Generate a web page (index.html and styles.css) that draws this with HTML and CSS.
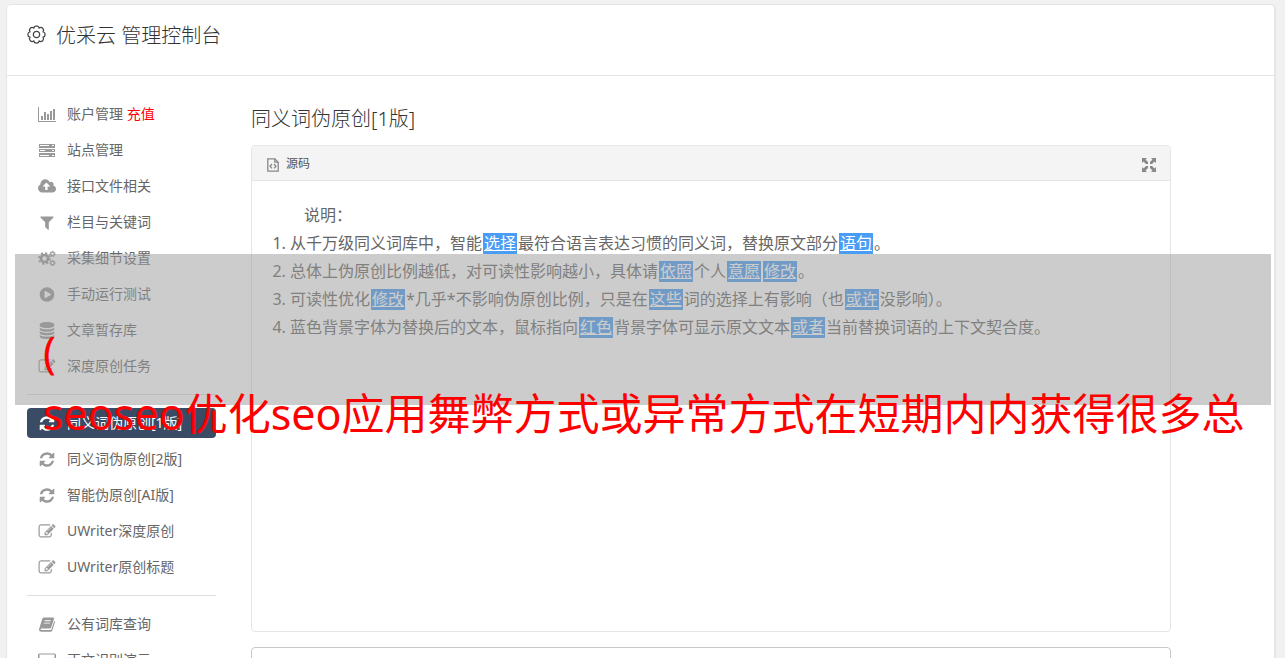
FILE: index.html
```
<!DOCTYPE html>
<html lang="zh-CN">
<head>
    <meta charset="UTF-8">
    <meta name="viewport" content="width=device-width, initial-scale=1.0">
    <title>优采云 管理控制台</title>
    <link rel="stylesheet" href="styles.css">
</head>
<body>
    <!-- shared icons -->
    <svg class="sprite" aria-hidden="true">
        <symbol id="i-edit" viewBox="0 0 1792 1792"><path d="M888 1184l116-116-152-152-116 116v56h96v96h56zm440-720q-16-16-33 1l-350 350q-17 17-1 33t33-1l350-350q17-17 1-33zm80 594v190q0 119-84.500 203.500t-203.500 84.500h-832q-119 0-203.500-84.500t-84.500-203.500v-832q0-119 84.500-203.500t203.500-84.500h832q63 0 117 25 15 7 18 23 3 17-9 29l-49 49q-14 14-32 8-23-6-45-6h-832q-66 0-113 47t-47 113v832q0 66 47 113t113 47h832q66 0 113-47t47-113v-126q0-13 9-22l64-64q15-15 35-7t20 29zm-96-738l288 288-672 672h-288v-288zm444 132l-92 92-288-288 92-92q28-28 68-28t68 28l152 152q28 28 28 68t-28 68z"/></symbol>
        <symbol id="i-refresh" viewBox="0 0 1792 1792"><path d="M1639 1056q0 5-1 7-64 268-268 434.500t-478 166.500q-146 0-282.500-55t-243.500-157l-129 129q-19 19-45 19t-45-19-19-45v-448q0-26 19-45t45-19h448q26 0 45 19t19 45-19 45l-137 137q71 66 161 102t187 36q134 0 250-65t186-179q11-17 53-117 8-23 30-23h192q13 0 22.500 9.500t9.500 22.500zm25-800v448q0 26-19 45t-45 19h-448q-26 0-45-19t-19-45 19-45l138-138q-148-137-349-137-134 0-250 65t-186 179q-11 17-53 117-8 23-30 23h-199q-13 0-22.500-9.500t-9.500-22.500v-7q65-268 270-434.500t480-166.500q146 0 284 55.500t245 156.500l130-129q19-19 45-19t45 19 19 45z"/></symbol>
    </svg>

    <div class="page">
        <header class="page-header">
            <svg class="gear" viewBox="-9 -9 18 18" aria-hidden="true">
                <path d="M6.200-2.600A2.700 2.700 0 0 1 6.200 2.600A2.600 2.600 0 0 1 2.600 6.200A2.700 2.700 0 0 1-2.600 6.200A2.600 2.600 0 0 1-6.200 2.600A2.700 2.700 0 0 1-6.200-2.600A2.600 2.600 0 0 1-2.600-6.200A2.700 2.700 0 0 1 2.600-6.200A2.600 2.600 0 0 1 6.200-2.600Z"/>
                <circle r="3"/>
            </svg>
            <h1>优采云 管理控制台</h1>
        </header>

        <div class="page-body">
            <nav class="menu">
                <a href="#"><svg class="crisp" viewBox="0 0 18 17"><path d="M0 1h1v14h17v1H0zM3 10h2v4H3zM6 6h2v8H6zM9 8h2v6H9zM12 5h2v9h-2zM15 3h2v11h-2z"/></svg><span>账户管理 <em>充值</em></span></a>
                <a href="#"><svg class="crisp" viewBox="0 0 18 17"><path fill-rule="evenodd" d="M1 2h16v4H1zM1 7h16v3H1zM1 11h16v4H1zM2 3v1h9V3zM14 3v1h2V3zM2 8v1h5V8zM14 8v1h2V8zM2 13v1h9v-1zM14 13v1h2v-1z"/></svg>站点管理</a>
                <a href="#"><svg viewBox="0 0 1920 1792"><path d="M1280 864q0-14-9-23l-352-352q-9-9-23-9t-23 9l-351 351q-10 12-10 24 0 14 9 23t23 9h224v352q0 13 9.500 22.500t22.500 9.500h192q13 0 22.500-9.500t9.500-22.500v-352h224q13 0 22.500-9.500t9.500-22.500zm640 288q0 159-112.500 271.500t-271.500 112.500h-1088q-185 0-316.500-131.500t-131.500-316.500q0-130 70-240t188-165q-2-30-2-43 0-212 150-362t362-150q156 0 285.500 87t188.500 231q71-62 166-62 106 0 181 75t75 181q0 76-41 138 130 31 213.500 135.500t83.500 238.500z"/></svg>接口文件相关</a>
                <a href="#"><svg viewBox="0 0 1792 1792"><path d="M1595 295q17 41-14 70l-493 493v742q0 42-39 59-13 5-25 5-27 0-45-19l-256-256q-19-19-19-45v-486l-493-493q-31-29-14-70 17-39 59-39h1280q42 0 59 39z"/></svg>栏目与关键词</a>
                <a href="#"><svg class="cogs" viewBox="0 0 18 16"><circle cx="6.500" cy="8" r="3.500" stroke-width="2.600"/><circle cx="6.500" cy="8" r="5.500" stroke-width="1.800" stroke-dasharray="2.160 2.160"/><circle cx="14.500" cy="3.500" r="1.800" stroke-width="1.300"/><circle cx="14.500" cy="3.500" r="2.700" stroke-width="1" stroke-dasharray="1.210 1.210"/><circle cx="14.500" cy="12.500" r="1.800" stroke-width="1.300"/><circle cx="14.500" cy="12.500" r="2.700" stroke-width="1" stroke-dasharray="1.210 1.210"/></svg>采集细节设置</a>
                <a href="#"><svg viewBox="0 0 1792 1792"><path d="M896 128q209 0 385.500 103t279.500 279.500 103 385.500-103 385.500-279.500 279.500-385.500 103-385.500-103-279.500-279.500-103-385.500 103-385.500 279.500-279.500 385.500-103zm384 823q32-18 32-55t-32-55l-544-320q-31-19-64-1-32 19-32 56v640q0 37 32 56 16 8 32 8 17 0 32-9z"/></svg>手动运行测试</a>
                <a href="#"><svg viewBox="0 0 1792 1792"><path d="M896 768q237 0 443-43t325-127v170q0 69-103 128t-280 93.500-385 34.500-385-34.500-280-93.500-103-128v-170q119 84 325 127t443 43zm0 768q237 0 443-43t325-127v170q0 69-103 128t-280 93.500-385 34.500-385-34.500-280-93.500-103-128v-170q119 84 325 127t443 43zm0-384q237 0 443-43t325-127v170q0 69-103 128t-280 93.500-385 34.500-385-34.500-280-93.500-103-128v-170q119 84 325 127t443 43zm0-1152q208 0 385 34.500t280 93.500 103 128v128q0 69-103 128t-280 93.500-385 34.500-385-34.500-280-93.500-103-128v-128q0-69 103-128t280-93.500 385-34.500z"/></svg>文章暂存库</a>
                <a href="#"><svg><use href="#i-edit"/></svg>深度原创任务</a>
                <hr>
                <a href="#" class="active"><svg><use href="#i-refresh"/></svg>同义词伪原创[1版]</a>
                <a href="#"><svg><use href="#i-refresh"/></svg>同义词伪原创[2版]</a>
                <a href="#"><svg><use href="#i-refresh"/></svg>智能伪原创[AI版]</a>
                <a href="#"><svg><use href="#i-edit"/></svg>UWriter深度原创</a>
                <a href="#"><svg><use href="#i-edit"/></svg>UWriter原创标题</a>
                <hr>
                <a href="#"><svg viewBox="0 0 18 16"><path fill-rule="evenodd" d="M6 1h9q1.500 0 1 1.500L13.200 11q-.4 1-1.400 1H3.500q-1 0-.9.800.1.700 1 .7h8.900q.8 0 1.100-.9l2.700-8.300q1 .5.600 1.600L14.300 14q-.4 1.300-1.700 1.300H3.500Q1 15.300 1 12.800L4.300 2.300Q4.700 1 6 1zM6.800 3.800l-.3.900h6l.3-.9zM6 6.200l-.3.900h6l.3-.9z"/></svg>公有词库查询</a>
                <a href="#"><svg viewBox="0 0 18 16"><path fill-rule="evenodd" d="M1.500 1h15q1.500 0 1.500 1.500v9q0 1.500-1.500 1.500H12l1 2H5l1-2H1.500Q0 13 0 11.500v-9Q0 1 1.500 1zM1.500 2v8h15V2z"/></svg>正文识别演示</a>
            </nav>

            <main class="content">
                <h2>同义词伪原创[1版]</h2>
                <section class="editor">
                    <div class="toolbar">
                        <button type="button">
                            <svg class="source-icon" viewBox="0 0 12 14"><path d="M.8.8h7l3.400 3.400v9H.8z"/><path d="M7.800.8v3.400h3.400M5 6L3 8.200l2 2.200M7 6l2 2.200-2 2.200"/></svg>
                            源码
                        </button>
                        <button type="button" aria-label="全屏">
                            <svg class="expand-icon" viewBox="0 0 14 14"><path d="M0 0h5L3.500 1.500 6 4v2H4L1.500 3.500 0 5zM14 0v5l-1.500-1.500L10 6H8V4l2.500-2.500L9 0zM0 14V9l1.500 1.500L4 8h2v2l-2.500 2.500L5 14zM14 14H9l1.500-1.500L8 10V8h2l2.500 2.500L14 9z"/></svg>
                        </button>
                    </div>
                    <div class="document">
                        <p>说明：</p>
                        <ol>
                            <li>从千万级同义词库中，智能<a href="#">选择</a>最符合语言表达习惯的同义词，替换原文部分<a href="#">语句</a>。</li>
                            <li>总体上伪原创比例越低，对可读性影响越小，具体请<a href="#">依照</a>个人<a href="#">意愿</a><a href="#">修改</a>。</li>
                            <li>可读性优化<a href="#">修改</a>*几乎*不影响伪原创比例，只是在<a href="#">这些</a>词的选择上有影响（也<a href="#">或许</a>没影响）。</li>
                            <li>蓝色背景字体为替换后的文本，鼠标指向<a href="#">红色</a>背景字体可显示原文文本<a href="#">或者</a>当前替换词语的上下文契合度。</li>
                        </ol>
                    </div>
                </section>
                <textarea class="result" aria-label="结果"></textarea>
            </main>
        </div>
    </div>

    <div class="banner">
        <p>(</p>
        <p>seoseo优化seo应用舞弊方式或异常方式在短期内内获得很多总</p>
    </div>
</body>
</html>
```

FILE: styles.css
```
* {
    box-sizing: border-box;
}

body {
    margin: 0;
    padding: 4px 9px 0 6px;
    background: #f1f1f1;
    color: #666;
    font-family: "Noto Sans", "Noto Sans CJK SC", sans-serif;
    font-size: 14px;
}

h1, h2, p, ol {
    margin: 0;
    padding: 0;
}

h1, h2 {
    color: #333;
    font-size: 20px;
    font-weight: 300;
    line-height: 32px;
}

.sprite {
    display: none;
}

.page {
    background: #fff;
    border: 1px solid #e5e5e5;
    border-right-width: 2px;
    border-radius: 5px;
}

.page-header {
    display: flex;
    align-items: flex-start;
    gap: 10px;
    height: 71px;
    padding: 15px 20px 0;
    border-bottom: 1px solid #e5e5e5;
}

.gear {
    width: 19px;
    height: 19px;
    margin-top: 5px;
    fill: none;
    stroke: #444;
    stroke-width: 1.2;
}

.page-body {
    display: flex;
    gap: 35px;
    padding: 23px 103px 20px 20px;
}

.menu {
    display: flex;
    flex-direction: column;
    flex: none;
    gap: 6px;
    width: 189px;
}

.menu a {
    display: flex;
    align-items: center;
    gap: 11px;
    height: 30px;
    padding-left: 11px;
    border-radius: 4px;
    color: #666;
    line-height: 30px;
    text-decoration: none;
}

.menu a.active {
    background: #3a4b66;
    color: #fff;
}

.menu svg {
    width: 18px;
    height: 17px;
    fill: #999;
}

.menu .crisp {
    shape-rendering: crispEdges;
}

.menu .active svg {
    fill: #fff;
}

.menu .cogs {
    fill: none;
    stroke: #999;
}

.menu em {
    color: #f00;
    font-style: normal;
}

.menu hr {
    width: 100%;
    margin: 7px 0;
    border: 0;
    border-top: 1px solid #ddd;
}

.content {
    flex: 1;
    min-width: 0;
    padding-top: 4px;
}

.editor {
    margin: 10px 0 15px;
    min-height: 487px;
    border: 1px solid #e5e5e5;
    border-radius: 4px;
}

.toolbar {
    display: flex;
    align-items: center;
    justify-content: space-between;
    height: 35px;
    padding: 0 14px 0 15px;
    background: #f4f4f4;
    border-bottom: 1px solid #e5e5e5;
    border-radius: 4px 4px 0 0;
}

.toolbar button {
    display: flex;
    align-items: center;
    gap: 7px;
    padding: 0;
    border: 0;
    background: none;
    color: #555;
    font-family: inherit;
    font-size: 12px;
    cursor: pointer;
}

.toolbar svg {
    margin-top: 3px;
}

.source-icon {
    width: 12px;
    height: 14px;
    fill: none;
    stroke: #888;
    stroke-width: 1.3;
}

.expand-icon {
    width: 14px;
    height: 14px;
    fill: #888;
}

.document {
    padding: 20px;
    font-size: 16px;
    line-height: 28px;
}

.document p {
    text-indent: 2em;
}

.document ol {
    padding-left: 18px;
}

.document li a {
    display: inline-block;
    margin: 0 1px;
    padding: 0 1px;
    background: #499df5;
    color: #fff;
    line-height: 21px;
}

.result {
    display: block;
    width: 100%;
    height: 120px;
    border: 1px solid #c8c8c8;
    border-radius: 4px;
    resize: none;
}

/* translucent strip lying over the page */
.banner {
    position: absolute;
    top: 254px;
    left: 15px;
    right: 14px;
    height: 151px;
    padding: 67px 0 0 28px;
    background: rgba(153, 153, 153, 0.5);
    color: #f00;
    font-size: 43px;
    line-height: 62px;
    white-space: nowrap;
}
```
